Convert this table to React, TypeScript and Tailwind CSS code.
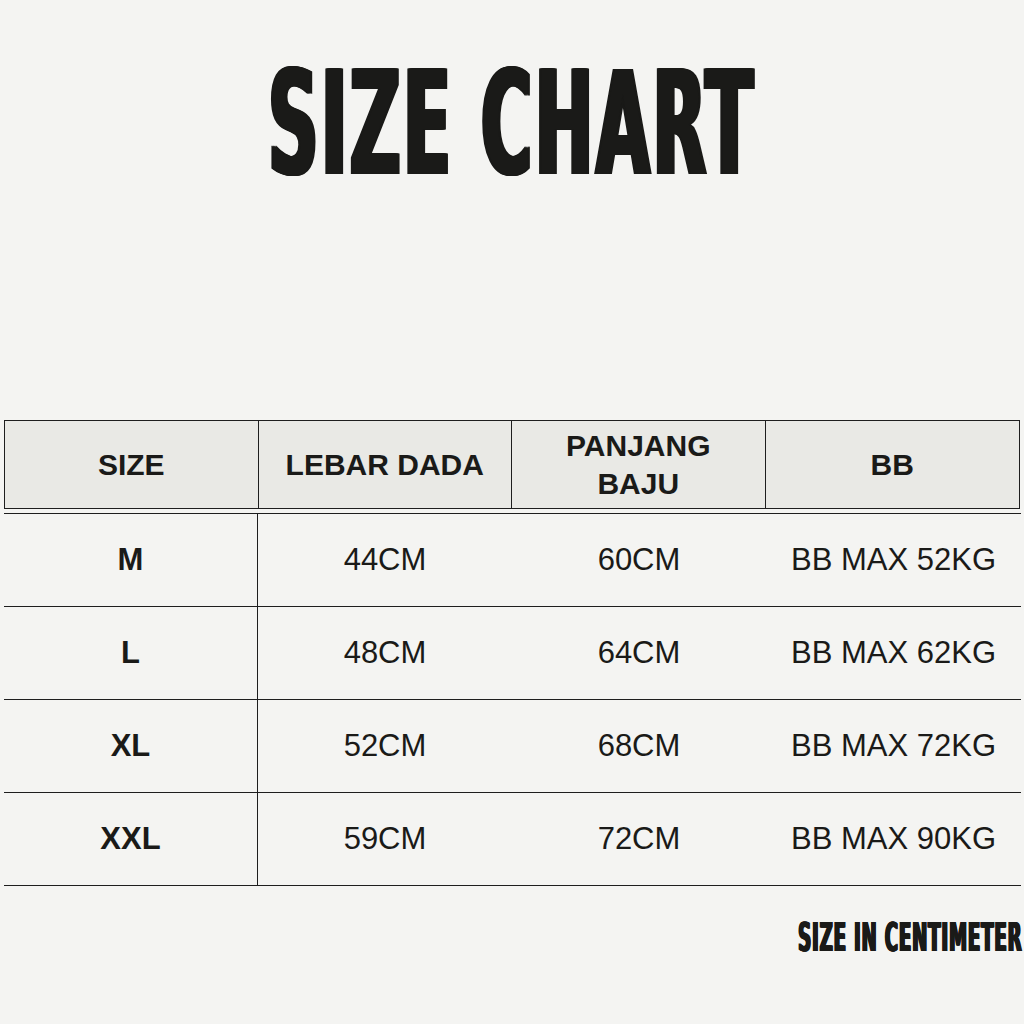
import React from 'react';

const rows = [
  { size: 'M', dada: '44CM', baju: '60CM', bb: 'BB MAX 52KG' },
  { size: 'L', dada: '48CM', baju: '64CM', bb: 'BB MAX 62KG' },
  { size: 'XL', dada: '52CM', baju: '68CM', bb: 'BB MAX 72KG' },
  { size: 'XXL', dada: '59CM', baju: '72CM', bb: 'BB MAX 90KG' },
];

const arial = { fontFamily: '"Liberation Sans", Arial, sans-serif' };
const narrow = { fontFamily: '"DejaVu Sans Condensed", "Liberation Sans", sans-serif' };

export default function App() {
  return (
    <div className="w-[1024px] h-[1024px] bg-[#f4f4f2] text-[#1a1a18] overflow-hidden" style={arial}>
      {/* title */}
      <div className="h-[420px] pt-[51px] flex justify-center">
        <div
          className="text-[145px] leading-none font-bold tracking-[6px] whitespace-nowrap scale-x-[0.53] origin-center [text-shadow:1.5px_0_0_#1a1a18,-1.5px_0_0_#1a1a18,3px_0_0_#1a1a18,-3px_0_0_#1a1a18,4.5px_0_0_#1a1a18,-4.5px_0_0_#1a1a18]"
          style={narrow}
        >
          SIZE CHART
        </div>
      </div>

      {/* header */}
      <div className="ml-[4px] w-[1016px] h-[89px] grid grid-cols-4 border border-[#1e1e1e] bg-[#e9e9e5]">
        <div className="flex items-center justify-center border-r border-[#1e1e1e] text-[30px] font-bold">SIZE</div>
        <div className="flex items-center justify-center border-r border-[#1e1e1e] text-[30px] font-bold">LEBAR DADA</div>
        <div className="flex items-center justify-center border-r border-[#1e1e1e] text-[30px] font-bold text-center leading-[38px]">
          PANJANG
          <br />
          BAJU
        </div>
        <div className="flex items-center justify-center text-[30px] font-bold">BB</div>
      </div>

      {/* body */}
      <div className="ml-[4px] w-[1017px] mt-[4px] border-t border-[#1e1e1e]">
        {rows.map((r) => (
          <div key={r.size} className="grid grid-cols-[254px_254px_254px_1fr] h-[93px] border-b border-[#1e1e1e] text-[31px]">
            <div className="flex items-center justify-center border-r border-[#1e1e1e] font-bold">{r.size}</div>
            <div className="flex items-center justify-center">{r.dada}</div>
            <div className="flex items-center justify-center">{r.baju}</div>
            <div className="flex items-center justify-center">{r.bb}</div>
          </div>
        ))}
      </div>

      {/* footer note */}
      <div className="mt-[32px] pr-[2px] flex justify-end">
        <div
          className="text-[39px] leading-none font-bold tracking-[1.5px] whitespace-nowrap scale-x-[0.52] origin-right [text-shadow:0.8px_0_0_#1a1a18,-0.8px_0_0_#1a1a18,1.6px_0_0_#1a1a18,-1.6px_0_0_#1a1a18]"
          style={narrow}
        >
          SIZE IN CENTIMETER
        </div>
      </div>
    </div>
  );
}
